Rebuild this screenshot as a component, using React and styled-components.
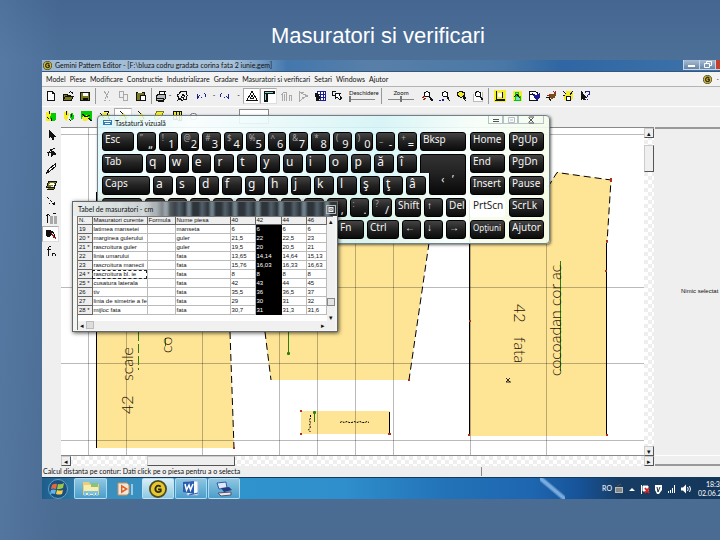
import React, { useState } from 'react'
import styled, { createGlobalStyle, css } from 'styled-components'

const COLORS = {
  k: '#111', g: '#a9a9a9', y: '#f4ee2a', o: '#7c7a1c', b: '#1b1e8c',
  n: '#0c0', w: '#fff', r: '#a02010', c: '#7fd8d8', t: '#7a4a1c', s: '#bbb'
}

// every icon is a list of [fill, stroke, path] on a 12x12 field
const ICONS = {
  newFile: [['w', 'k', 'M2.500 1.500h5l2 2v7h-7z M7.500 1.500v2h2']],
  open: [['o', 'k', 'M1.500 10V4h3l1 1h3v1.500M1.500 10l2-3.500h8L9.500 10z'], ['', 'k', 'M7 2.500q2-1.500 3.500 .5v1']],
  save: [['o', 'k', 'M1.500 2.500h9v8h-9z'], ['w', '', 'M4 2.500h4.500v3.500H4z'], ['k', '', 'M3.500 8h5v3h-5z']],
  cut: [['', 'g', 'M3.500 1.500l4 7M8 1.500l-4 7M3 10.500h1.500M7.500 10.500h1.500']],
  copy: [['', 'g', 'M1.500 1.500h4v6h-4zM5.500 4.500h4v6h-4z']],
  paste: [['o', 'k', 'M1.500 2.500h8v8h-8z'], ['w', 'k', 'M5.500 5.500h5v5h-5z'], ['', 'w', 'M3 2.500h4']],
  print: [['w', 'k', 'M4 4.500l1-3h5l-1 3'], ['s', 'k', 'M1.500 5.500l2-1h7v4l-2 1.500h-7z'], ['', 'k', 'M2 8h7M3 11h6']],
  gear: [['', 'k', 'M4 2.500l2-1.500 2 1 2-.5 0 2 1.500 2-1.500 1 0 3-2 0-2 1-1.500-1.500-2.500 .5 0-3-1-1.500 2-1z M6.500 4.500l2 1-1 2.500-2-1z M1 11l3-3']],
  undo: [['', 'b', 'M1.500 4v4l2-2.500M5 7.500h1M8.500 3.500q2 2 0 4']],
  redo: [['', 'b', 'M2.500 3.500q-2 2 0 4M5 7.500h1M7 6l2 2v-4.500']],
  triangle: [['', 'k', 'M6 1.500L11 10H1zM4.500 8h3l-1.500-2.500z']],
  corner: [['k', 'k', 'M1 1h10v2.500H4V11H1.500z'], ['', 'c', 'M2 2.200h8M2.600 4v6']],
  grayA: [['', 'g', 'M2.500 3v8M4.500 4v7M6.500 2v9M9 5v6M1 5l3-3 3 1M9 5h2v6']],
  grayB: [['', 'g', 'M2.500 2v9l7-5zM4 3l7 3-6 2M3 2h4']],
  film: [['w', 'b', 'M3 1.500h8.500v9H3zM3 4.500h8M6.500 1.500v9M9 1v10M3 7.500h8'], ['k', '', 'M1 3h3l2 4-1 4H2z']],
  pointer: [['', 'k', 'M5 1.500H1.500v4H4'], ['w', 'k', 'M4.500 3.500h5l-1.500 1.500 2.500 3-1.500 2-3-3-1.500 1z']],
  zoomA: [['w', 'k', 'M6 1.500l2.500 1v3L6 7 3.500 5.500v-3zM7.500 6.500l4 4.500M8.500 6.500l3 3.500'], ['', 'r', 'M1 8l3-2M2 10l3-2']],
  zoomB: [['w', 'k', 'M7 1.500l2.500 1v3L7 7 4.500 5.500v-3zM8.500 6.500l3 4.500M9.500 6.500l2 3'], ['', 'b', 'M1 10.500h2M4 9v2M5.500 8.500v2']],
  zoomC: [['y', 'k', 'M5.500 1.500l4 1v3l-3.500 2L2.500 5.500v-3zM7.500 6.500l3.500 4.500M9 6l2 3']],
  zoomD: [['w', 's', 'M1.500 4v7h9V2'], ['w', 'k', 'M5.500 1.500l3 1v3L6 7 3.500 5.500v-3zM7.500 6.500l3 3.500M8.500 6.500l2 2.500']],
  ruler: [['y', 'y', 'M0 0h12v12H0z'], ['', 'k', 'M2.500 1v8h8M8.500 2v6M1 10.500h10'], ['w', '', 'M4 3h3.500v4H4z']],
  people: [['y', '', 'M2 1h9v10H2z'], ['c', 'n', 'M4 2.500h3v3H4zM5 6.500h4v4H4z'], ['', 'k', 'M3 7l3-3 3 4']],
  folder: [['w', 'k', 'M1.500 1.500h6l2 1.500v7.500h-8z'], ['b', 'b', 'M5 4l3 2 3-2v3.500L9 10 6.500 7.500z'], ['', 'k', 'M1 4h5']],
  brush: [['t', 't', 'M5 4h4l2-2.500-1 5L7.500 8.500 4.500 7z'], ['y', 'k', 'M1.500 7l3 1 1 3'], ['', 'r', 'M8 1l3 3M2 5h3']],
  spark: [['y', 'y', 'M5 1l5 1 1 6-4 3-5-2z'], ['w', 'k', 'M4.500 6h4v4h-4zM1 1l3 3M8 5l3-4M1 5h2']],
  help: [['k', 'k', 'M2 1.500v8l2-2 1 2.500 1-.5-1-2.500h2z'], ['', 'b', 'M6.500 3q0-2 2-2t2 2-2 2.500v1.500M8.500 8.500v1.500']],
  pieceA: [['y', '', 'M1 2l3-1 2 3v7H1z'], ['n', '', 'M6 3h5v7l-3 1.500-3-3z'], ['', 'k', 'M4 1v3M2 7l2 2M6.500 8v3']],
  pieceB: [['y', '', 'M1 2l4-1 1 4-2 6-3-2z'], ['n', '', 'M8 3q3 0 3 4t-3 3l-1-4z'], ['', 'k', 'M3 1l1 4M6 9l2 2M8 4v3']],
  pieceC: [['n', '', 'M0 1h11v9l-4-2-4 2-3-1z'], ['y', '', 'M1 7l5-2 4 5-8 1z'], ['', 'k', 'M1 4l4 3 4-2M7 8l4 3']],
  pieceD: [['y', '', 'M1 5l5-3 5 2-2 7H2z'], ['', 'k', 'M1 3l4 5M5 1h5l-2 4M9 6l2 5']],
  pieceE: [['y', '', 'M1 8l5-5 5 5-3 3H3z'], ['', 'k', 'M3 1l3 3M7 5l2 4']],
  pieceF: [['y', 'o', 'M4 1h7l-3 6-5 4-2-4z']],
  pieceG: [['y', 'k', 'M2.500 1.500h8v9l-8-1zM5 1v9M8 1v9M2 5h8']],
  arrow: [['k', 'k', 'M4 1v8l2-1.500L8 11l1-1-1.500-3H9.500z']],
  curve: [['', 'k', 'M3 11q-1-6 7-9M2 6h8'], ['k', 'k', 'M6 4l5 4-3 .5-1.500 2z']],
  pen: [['w', 'k', 'M10.500 1.500L3 8l1 2 7-6zM3 8l-1.500 3 2-1']],
  book: [['o', 'k', 'M3.500 2.500h8l-2 6H1.500zM2 10.500h7l1.500-6'], ['w', '', 'M5 4h4v1.500H4.500z']],
  line: [['', 'k', 'M2 2l2 2M5 5l2 2M7.500 8.500l2 1v-3M4 8.500h1']],
  bars: [['', 'k', 'M2.500 3v8M1 4l2-2 2 2M8 2l3-1'], ['g', 'g', 'M5 4h2v7H5zM9 4h2v7H9z']],
  measure: [['k', 'k', 'M1 3l4-1 2 3-2 3H2z'], ['', 'r', 'M6 5l5 6M8 9h3'], ['', 'k', 'M7 3l2 3M9 6v3']],
  fx: [['', 'k', 'M6 1.500H4.500Q3 2 3.500 5v6M1.500 4.500H6M7 8.500h3M7 8v3M10 8.500v2.500']]
}

const TOP_TOOLS = [
  ['newFile', 17], ['open', 17], ['save', 17], ['|'], ['cut', 17], ['copy', 17], ['paste', 17], ['|'],
  ['print', 14], ['.', 4], ['gear', 20], ['undo', 20], ['.', 4], ['redo', 18], ['.', 9],
  ['triangle', 17, true], ['corner', 17, true], ['grayA', 17], ['grayB', 17], ['film', 17], ['pointer', 17],
  ['slider', 34, 'Deschidere'], ['|'], ['slider', 34, 'Zoom'],
  ['zoomA', 17], ['zoomB', 17], ['zoomC', 17], ['zoomD', 17], ['|'],
  ['ruler', 17], ['people', 17], ['folder', 17], ['brush', 17], ['spark', 17], ['help', 17]
]
const PIECE_TOOLS = ['pieceA', 'pieceB', 'pieceC', 'pieceD', 'pieceE', 'pieceE', 'pieceF', 'pieceG']
const SIDE_TOOLS = ['arrow', 'curve', 'pen', 'book', 'line', 'bars', 'measure', 'fx']
const MENUS = ['Model', 'Piese', 'Modificare', 'Constructie', 'Industrializare', 'Gradare',
  'Masuratori si verificari', 'Setari', 'Windows', 'Ajutor']

// key: [label, width (0 = stretch), upper symbol]
const ROWS = [
  [['Esc', 32], ['„', 0, '”'], ['1', 0, '!'], ['2', 0, '@'], ['3', 0, '#'], ['4', 0, '$'], ['5', 0, '%'],
    ['6', 0, '^'], ['7', 0, '&'], ['8', 0, '*'], ['9', 0, '('], ['0', 0, ')'], ['-', 0, '_'], ['=', 0, '+'], ['Bksp', 46]],
  [['Tab', 41], ['q'], ['w'], ['e'], ['r'], ['t'], ['y'], ['u'], ['i'], ['o'], ['p'], ['ă'], ['î'], ['', 46]],
  [['Caps', 48], ['a'], ['s'], ['d'], ['f'], ['g'], ['h'], ['j'], ['k'], ['l'], ['ş'], ['ţ'], ['â'], ['‹   ’', 37]],
  [['', 40], [''], [''], [''], [''], [''], [''], [''], [''], [',', 0, ';'], ['.', 0, ':'], ['/', 0, '?'],
    ['Shift', 26], ['↑', 19], ['Del', 20]],
  [['', 32], ['', 30], [''], ['', 30], ['Fn', 27], ['Ctrl', 32], ['←', 19], ['↓', 19], ['→', 20]]
]
const NAV_KEYS = ['Home', 'PgUp', 'End', 'PgDn', 'Insert', 'Pause', 'PrtScn', 'ScrLk', 'Opţiuni', 'Ajutor']

const HEAD = ['N.', 'Masuratori curente', 'Formula', 'Nume piesa', '40', '42', '44', '46']
const DATA = [
  ['19', 'latimea mansetei', 'manseta', '6', '6', '6', '6'],
  ['20 *', 'marginea gulerului', 'guler', '21,5', '22', '22,5', '23'],
  ['21 *', 'rascroitura guler', 'guler', '19,5', '20', '20,5', '21'],
  ['22', 'linia umarului', 'fata', '13,65', '14,14', '14,64', '15,13'],
  ['23', 'rascroitura manecii', 'fata', '15,76', '16,03', '16,33', '16,63'],
  ['24 *', 'rascroitura bl. ie', 'fata', '8', '8', '8', '8'],
  ['25 *', 'cusatura laterala', 'fata', '42', '43', '44', '45'],
  ['26', 'tiv', 'fata', '35,5', '36', '36,5', '37'],
  ['27', 'linia de simetrie a fe', 'fata', '29', '30', '31', '32'],
  ['28 *', 'mijloc fata', 'fata', '30,7', '31', '31,3', '31,6']
]

const Icon = ({ name }) => (
  <Glyph viewBox="0 0 12 12" aria-hidden="true">
    {ICONS[name].map(([fill, stroke, d], i) => (
      <path key={i} d={d} fill={COLORS[fill] || 'none'} stroke={COLORS[stroke] || 'none'} />
    ))}
  </Glyph>
)

const Logo = () => (
  <svg width="9" height="9" viewBox="0 0 20 20" aria-hidden="true">
    <circle cx="10" cy="10" r="9" fill="#d9c33c" stroke="#4b4520" strokeWidth="2" />
    <path d="M14 7Q10 3 7 7t1 7q4 2 6-1v-3h-4" fill="none" stroke="#3a3516" strokeWidth="3" />
  </svg>
)

const Drawing = () => (
  <Canvas viewBox="61 128 583 327" preserveAspectRatio="xMinYMin slice">
    <g fill="#fee596">
      <path d="M96 192H225L234 448H96z" />
      <path d="M246 192H436L409 380H271z" />
      <path d="M469 200L540 200 557 172 611 180 607 243V436H469z" />
      <path d="M301 411h89v23h-89z" />
    </g>
    <path
      d="M88.500 128V456M126.500 300V456M202.500 300V456M279.500 300V456M317.500 240V456M355.500 240V456M393.500 240V456M470.500 240V456M546.500 240V456M61 134.500H644M61 287.500H644M61 363.500H644M61 440.500H644"
      fill="none" stroke="#000" strokeOpacity=".27"
    />
    <g fill="none" stroke="#000">
      <path d="M96.500 192V448M469.500 200V436M606.500 243V436M389.500 412V434" />
      <path d="M230 332L234 448M265 332L271 380M429 243L409 380M548 187L557 172.500 611 180 607 243" strokeDasharray="7 4" />
      <path d="M340 422.500l2-1 2 1 3-1 2 1 3 0 2-1 3 1 3-1 2 1 3 0 2-1 2 1M310.500 415v3l-1 2 1 3-1 2 1 2-2 3 2 2" strokeDasharray="2 1" />
      <path d="M506 378l4 4M510 378l-4 4M506 382h5" strokeWidth=".8" />
    </g>
    <g fill="none" stroke="#2e7d0e">
      <path d="M138.500 332V370" strokeDasharray="9 3" />
      <path d="M288.500 332V354M314.500 412V422M560.500 261V371M165.500 338v8" />
      <path d="M287.500 352.500h2v2h-2zM313.500 411.500h2v2h-2z" />
    </g>
    <path
      d="M300 410h2v2h-2zM300 433h2v2h-2zM388 433h3v2h-3zM408 379h2v2h-2zM233 447h2v2h-2zM468 434h2v2h-2zM606 434h2v2h-2zM610 178h2v4h-2zM606 240h2v2h-2zM605 270h2v2h-2zM469 320h2v2h-2z"
      fill="#b03018"
    />
    <Mark transform="translate(133 414) rotate(-90)">42</Mark>
    <Mark transform="translate(133 381) rotate(-90)">scale</Mark>
    <Mark transform="translate(172 353) rotate(-90)">co</Mark>
    <Mark transform="translate(514 304) rotate(90)">42</Mark>
    <Mark transform="translate(514 337) rotate(90)">fata</Mark>
    <Mark transform="translate(561 376) rotate(-90)">cocoadan cor ac</Mark>
  </Canvas>
)

const Keyboard = () => (
  <KeyboardWindow aria-label="Tastatură vizuală">
    <KeyboardTitle>
      <svg width="9" height="7" viewBox="0 0 9 7" aria-hidden="true">
        <path d="M0 1h9v5H0z" fill="#2f7fb8" /><path d="M1 2.500h7M2 4.500h5" stroke="#fff" />
      </svg>
      <span>Tastatură vizuală</span>
      <WindowButtons>
        <PaleButton aria-label="Minimizare"><svg width="12" height="8"><path d="M3 3.500h6M3 5.500h6" stroke="#555" /></svg></PaleButton>
        <PaleButton aria-label="Maximizare"><svg width="12" height="8"><path d="M3.500 1.500h6v5h-6zM5 4h3" fill="none" stroke="#bbc" /></svg></PaleButton>
        <PaleButton $wide aria-label="Închidere"><svg width="12" height="8"><path d="M3.500 1.500l5 5M8.500 1.500l-5 5M4 1h5M4 7h5" stroke="#555" /></svg></PaleButton>
      </WindowButtons>
    </KeyboardTitle>
    <KeyArea>
      <KeyRows>
        {ROWS.map((row, r) => (
          <KeyRow key={r}>
            {row.map(([label, width, symbol], i) => {
              const enter = i === row.length - 1 && (r === 1 ? 'top' : r === 2 ? 'bottom' : '')
              return (
                <Key key={i} $width={width} $letter={!width && !symbol} $enter={enter} aria-label={label.trim() || 'Tastă'}>
                  {symbol && <Symbol>{symbol}</Symbol>}
                  <KeyLabel $low={!!symbol}>{label}</KeyLabel>
                </Key>
              )
            })}
          </KeyRow>
        ))}
      </KeyRows>
      <NavGrid>
        {NAV_KEYS.map(label => (
          <Key key={label} $active={label === 'PrtScn'} $small={label === 'Opţiuni'}>{label}</Key>
        ))}
      </NavGrid>
    </KeyArea>
  </KeyboardWindow>
)

const Measurements = () => (
  <TableWindow aria-label="Tabel de masuratori">
    <TableTitle>
      <span>Tabel de masuratori - cm</span>
      <CloseBox aria-label="Inchide">
        <svg width="8" height="7"><path d="M2 1.500h4v4H2zM2 1.500l4 4M6 1.500l-4 4" fill="none" stroke="#eee" /></svg>
      </CloseBox>
    </TableTitle>
    <TableBody>
      <Table>
        <colgroup>
          {[14, 55, 28, 55, 25, 26, 25, 20].map((w, i) => <Col key={i} $width={w} />)}
        </colgroup>
        <thead>
          <tr>{HEAD.map(h => <Th key={h}>{h}</Th>)}</tr>
        </thead>
        <tbody>
          {DATA.map(([no, name, piece, ...sizes]) => (
            <tr key={no}>
              <Th as="th" scope="row">{no}</Th>
              <Td $focus={no === '24 *'}>{name}</Td>
              <Td />
              <Td>{piece}</Td>
              {sizes.map((s, i) => <Td key={i} $dark={i === 1}>{s}</Td>)}
            </tr>
          ))}
        </tbody>
      </Table>
      <SlimTrack>
        <SlimButton aria-label="Sus">▴</SlimButton>
        <SlimThumb />
        <SlimButton aria-label="Jos">▾</SlimButton>
      </SlimTrack>
      <SlimFoot>
        <SlimButton aria-label="Stanga">◂</SlimButton>
        <FootThumb />
        <SlimButton aria-label="Dreapta">▸</SlimButton>
      </SlimFoot>
    </TableBody>
  </TableWindow>
)

const Taskbar = () => (
  <Bar>
    <TaskButton $plain $width={31} aria-label="Start">
      <svg width="22" height="20" viewBox="0 0 22 20">
        <circle cx="11" cy="10" r="9.500" fill="#1c4f7e" stroke="#5fa4c8" />
        <path d="M5 6q3-2 5-1l-1 5q-3-1-5 0z" fill="#e8683a" />
        <path d="M11 5q3 1 6-1l-1 5q-3 1.500-6 1z" fill="#9cc845" />
        <path d="M4 11q3-1 5 0l-1 4q-2-1-5 0z" fill="#5db6ea" />
        <path d="M10 11q3 1 6 0l-1 4q-3 1-6 0z" fill="#f6cf47" />
      </svg>
    </TaskButton>
    <TaskButton $width={33} aria-label="Explorer">
      <svg width="20" height="17" viewBox="0 0 20 17">
        <path d="M2 2h6l1 2h9v11H2z" fill="#e9cf76" /><path d="M3 5h14v10H3z" fill="#f8edab" />
        <path d="M10 3h7v4h-7z" fill="#8cc17a" /><path d="M4 16v-4h12v4M8 16v-3h5v3" fill="none" stroke="#7cc0e4" strokeWidth="2" />
      </svg>
    </TaskButton>
    <TaskButton $plain $width={33} aria-label="Media Player">
      <svg width="18" height="16" viewBox="0 0 18 16">
        <path d="M15 3h2v11h-2z" fill="#9cc8e6" />
        <path d="M2 2h9l2 2v8l-2 2H2z" fill="#ece6dc" stroke="#c9905c" />
        <path d="M5 3.500l7 4.500-7 4.500z" fill="#e3611b" /><path d="M6.500 6.500l2.500 1.500-2.500 1.500z" fill="#fff" />
      </svg>
    </TaskButton>
    <TaskButton $width={32} $open aria-label="Gemini">
      <svg width="18" height="18" viewBox="0 0 20 20">
        <circle cx="10" cy="10" r="9" fill="#e6c92e" stroke="#4e4a24" strokeWidth="2" />
        <path d="M13 7.500Q10 5 8 7.500t0 5q2.500 2 5 0v-2h-3" fill="none" stroke="#2e2a10" strokeWidth="2" />
      </svg>
    </TaskButton>
    <TaskButton $width={32} aria-label="Word">
      <svg width="18" height="17" viewBox="0 0 18 17">
        <path d="M5 1h11v14H5z" fill="#f5f8fc" stroke="#9cb4d6" /><path d="M1 2l11-1v13L1 12z" fill="#2a5db0" />
        <path d="M3 4l1.500 6L7 5l1.500 5L11 4" fill="none" stroke="#fff" strokeWidth="1.500" /><path d="M7 15l9-2" stroke="#2a5db0" />
      </svg>
    </TaskButton>
    <TaskButton $width={32} aria-label="Imprimanta">
      <svg width="18" height="16" viewBox="0 0 18 16">
        <path d="M2 2l9-1 1 6-8 1z" fill="#dde8f8" stroke="#3358a8" /><path d="M6 7l8-1 3 3-8 2z" fill="#2a3a80" />
        <path d="M3 12l13-1v3l-10 1z" fill="#e7e9f2" stroke="#556" />
      </svg>
    </TaskButton>
    <Tray>
      <span>RO</span>
      <svg width="90" height="12" viewBox="614 0 90 12" aria-hidden="true">
        <path d="M615 4h8v6h-8z" fill="#b9bcb6" /><path d="M616 6h6M616 8h6M617 3l4-2" stroke="#555" />
        <path d="M629 8l3-3 3 3z" fill="#fff" />
        <path d="M641.500 2v9M643 3h5v5h-5z" fill="#fff" stroke="#fff" /><path d="M645 5l4 5M649 5l-4 5" stroke="#d22" strokeWidth="2" />
        <path d="M655 2h7v5l-3 4h-2l-2-4z" fill="#fff" /><path d="M657 4l1 5 2-5" fill="none" stroke="#234" />
        <path d="M668.500 8v2M670.500 7v3M672.500 5v5M674.500 2v8" stroke="#fff" />
        <path d="M681 4.500h2l3-3v9l-3-3h-2z" fill="#fff" /><path d="M687.500 4q1.500 2 0 4M689.500 3q2 3 0 6" stroke="#fff" fill="none" />
      </svg>
      <Clock><span>18:34</span><span>02.06.20</span></Clock>
    </Tray>
  </Bar>
)

const App = () => {
  const [values, setValues] = useState({ Deschidere: 0, Zoom: 50 })

  return (
    <Slide>
      <GlobalStyle />
      <Heading>Masuratori si verificari</Heading>
      <Screen>
        <TitleBar>
          <Logo />
          <span>Gemini Pattern Editor - [F:\bluza codru gradata corina fata 2 iunie.gem]</span>
          <Controls>
            <Control aria-label="Minimize"><svg width="15" height="9"><path d="M4 5h7v2H4z" fill="#fff" /></svg></Control>
            <Control aria-label="Restore"><svg width="15" height="9"><path d="M4.500 3.500h5v4h-5zM6.500 3V1.500h5v4H10" fill="none" stroke="#fff" /></svg></Control>
            <Control $close aria-label="Close" />
          </Controls>
        </TitleBar>
        <MenuBar>
          {MENUS.map(m => <MenuItem key={m}>{m}</MenuItem>)}
          <MenuEnd><Logo /><i>-</i></MenuEnd>
        </MenuBar>
        <Toolbar>
          {TOP_TOOLS.map(([name, width, extra], i) => {
            if (name === '|') return <Separator key={i} />
            if (name === '.') return <More key={i} $width={width}>-</More>
            if (name === 'slider') {
              return (
                <SliderBox key={i} $width={width}>
                  <span>{extra}</span>
                  <Slider
                    type="range"
                    value={values[extra]}
                    onChange={e => setValues({ ...values, [extra]: Number(e.target.value) })}
                  />
                </SliderBox>
              )
            }
            return <Tool key={i} $width={width} $pressed={extra} aria-label={name}><Icon name={name} /></Tool>
          })}
        </Toolbar>
        <Toolbar $second>
          {PIECE_TOOLS.map((name, i) => <Tool key={i} $width={18} $pressed={i === 4} aria-label={name}><Icon name={name} /></Tool>)}
          <Option><input type="checkbox" aria-label="Automat" /></Option>
          <Field aria-label="Valoare" />
        </Toolbar>
        <Work>
          <Side>
            {SIDE_TOOLS.map(name => <Tool key={name} $width={17} $pressed={name === 'measure'} aria-label={name}><Icon name={name} /></Tool>)}
          </Side>
          <Sheet>
            <Drawing />
            <Track>
              <ScrollButton aria-label="Sus">▴</ScrollButton>
              <Thumb />
              <ScrollButton $end aria-label="Jos">▾</ScrollButton>
            </Track>
            <Track $across>
              <ScrollButton aria-label="Stanga">◂</ScrollButton>
              <Thumb $across />
            </Track>
            <ScrollButton aria-label="Dreapta">▸</ScrollButton>
          </Sheet>
          <Pane><p>Nimic selectat</p></Pane>
        </Work>
        <Status>
          <span>Calcul distanta pe contur: Dati click pe o piesa pentru a o selecta</span>
          <span />
        </Status>
        <Taskbar />
        <Keyboard />
        <Measurements />
      </Screen>
    </Slide>
  )
}

export default App

const GlobalStyle = createGlobalStyle`
  * {
    box-sizing: border-box;
  }
  body {
    margin: 0;
    overflow: hidden;
    background: #4a6c93;
  }
  button, input {
    font: inherit;
    color: inherit;
    margin: 0;
    padding: 0;
    border: 0;
    border-radius: 0;
    background: none;
  }
`

const Slide = styled.main`
  min-height: 100vh;
  padding-left: 42px;
  overflow: hidden;
  font-family: Lato, 'Liberation Sans', sans-serif;
  font-size: 7px;
  line-height: 9px;
  color: #111;
  background:
    linear-gradient(90deg, rgba(110, 150, 195, .25), transparent 60px),
    linear-gradient(#446690, #4d7099 60px, #4a6b92);
`
const Heading = styled.h1`
  height: 60px;
  margin: 0;
  padding: 10px 6px 0 0;
  text-align: center;
  font-family: 'Liberation Sans', sans-serif;
  font-size: 22px;
  font-weight: 400;
  line-height: 52px;
  color: #fff;
`
const Screen = styled.section`
  position: relative;
  background: #efefef;
`
const TitleBar = styled.header`
  display: flex;
  align-items: center;
  gap: 3px;
  height: 12px;
  padding-left: 1px;
  white-space: nowrap;
  background: linear-gradient(90deg, #9db9d4, #a9c2da 190px, #4377ad 245px, #587fa8 330px, #4a78a6 460px, #2f66a3 520px, #3f72aa);
  border-bottom: 1px solid #34577e;
`
const Controls = styled.div`
  display: flex;
  align-self: flex-start;
  margin-left: auto;
`
const Control = styled.button`
  display: flex;
  width: ${props => props.$close ? '5px' : '16px'};
  height: 10px;
  border: 1px solid #c8d6e4;
  border-top: 0;
  border-right: 0;
  background: ${props => props.$close ? '#c5402c' : 'linear-gradient(#a9bdd2, #6484a8)'};
`
const MenuBar = styled.nav`
  display: flex;
  align-items: center;
  gap: 4px;
  height: 14px;
  padding-left: 4px;
  background: #f3f3f3;
`
const MenuItem = styled.button`
  white-space: nowrap;
`
const MenuEnd = styled.span`
  display: flex;
  gap: 5px;
  margin-left: auto;
  padding-right: 1px;
`
const Toolbar = styled.div`
  display: flex;
  align-items: center;
  height: ${props => props.$second ? '21px' : '20px'};
  padding-bottom: 2px;
  border-top: 1px solid ${props => props.$second ? '#fff' : '#b4b4b4'};
`
const Tool = styled.button`
  display: flex;
  flex: none;
  align-items: center;
  justify-content: center;
  width: ${props => props.$width}px;
  height: 16px;
  ${props => props.$pressed && css`
    background: #fff;
    border: 1px solid #aaa;
    border-right-color: #ddd;
    border-bottom-color: #ddd;
  `}
`
const Glyph = styled.svg`
  flex: none;
  width: 12px;
  height: 12px;
  shape-rendering: crispEdges;
`
const Separator = styled.span`
  width: 1px;
  height: 16px;
  margin: 0 2px;
  background: #999;
`
const More = styled.span`
  width: ${props => props.$width}px;
  text-align: center;
`
const SliderBox = styled.label`
  display: flex;
  flex-direction: column;
  width: ${props => props.$width}px;
  padding: 0 4px;
  font-size: 6px;
  line-height: 7px;
  text-align: center;
`
const Slider = styled.input`
  appearance: none;
  width: 100%;
  height: 6px;
  background: linear-gradient(#888, #888) 0 3px / 100% 1px no-repeat;
  &::-webkit-slider-thumb {
    appearance: none;
    width: 2px;
    height: 6px;
    background: #777;
  }
`
const Option = styled.label`
  display: flex;
  width: 38px;
  margin-left: 4px;
  input {
    width: 7px;
    height: 7px;
  }
`
const Field = styled.input`
  width: 30px;
  height: 15px;
  margin-left: 11px;
  border: 1px solid #888;
  background: #fff;
`
const Work = styled.div`
  display: flex;
`
const Side = styled.div`
  display: grid;
  grid-template-rows: repeat(8, 1fr);
  height: 132px;
  width: 19px;
`
const Sheet = styled.div`
  display: grid;
  flex: 1;
  grid-template-columns: 1fr 10px;
  grid-template-rows: auto 10px;
  border-top: 1px solid #888;
  background: #fff;
`
const Canvas = styled.svg`
  display: block;
  width: 100%;
  height: auto;
  border-bottom: 1px solid #888;
`
const Mark = styled.text`
  font-family: Lato, sans-serif;
  font-size: 16px;
  font-weight: 300;
  fill: #1c1206;
`
const Track = styled.div`
  display: flex;
  flex-direction: ${props => props.$across ? 'row' : 'column'};
  background: conic-gradient(#eee 25%, #fff 0 50%, #eee 0 75%, #fff 0) 0 0 / 8px 8px;
`
const ScrollButton = styled.button`
  width: 10px;
  height: 10px;
  margin-top: ${props => props.$end ? 'auto' : 0};
  line-height: 7px;
  background: #efefef;
  border: 1px solid #ccc;
  border-right-color: #555;
  border-bottom-color: #555;
`
const Thumb = styled.div`
  width: ${props => props.$across ? '88px' : '10px'};
  height: ${props => props.$across ? '10px' : '27px'};
  margin: ${props => props.$across ? '0 0 0 76px' : '7px 0 0'};
  background: #efefef;
  border: 1px solid #ccc;
  border-right-color: #555;
  border-bottom-color: #555;
`
const Pane = styled.aside`
  width: 65px;
  margin-left: 1px;
  padding-left: 26px;
  border-top: 2px solid #999;
  border-bottom: 2px solid #999;
  background: linear-gradient(#fff, #fff) 0 326px / 100% 1px no-repeat;
  white-space: nowrap;
  p {
    margin: 158px 0 0;
    font: 6px/9px 'Liberation Sans', sans-serif;
  }
`
const Status = styled.footer`
  display: flex;
  align-items: center;
  justify-content: space-between;
  height: 11px;
  padding-left: 1px;
  span + span {
    width: 239px;
    height: 9px;
    border-left: 1px solid #888;
  }
`
const Bar = styled.div`
  display: flex;
  gap: 1px;
  height: 22px;
  border-top: 1px solid #123a5c;
  background:
    linear-gradient(to top right, transparent 40%, rgba(160, 205, 245, .7) 47% 53%, transparent 60%) 498px 0 / 25px 21px no-repeat,
    linear-gradient(90deg, #1d5d8c, #3a8fbd 60px, #2f93cc 200px, #2f8fcc 300px, #2373b8 400px, #1e66b0 490px, #17549a 535px, #173c63 580px, #14365a);
`
const TaskButton = styled.button`
  display: flex;
  align-items: center;
  justify-content: center;
  width: ${props => props.$width}px;
  height: 21px;
  ${props => !props.$plain && css`
    border: 1px solid rgba(190, 228, 245, .8);
    border-radius: 2px;
    background: ${props.$open ? 'linear-gradient(#d9eef6, #8cc7e2)' : 'linear-gradient(#8fc6e0, #4a9ecb)'};
  `}
`
const Tray = styled.div`
  display: flex;
  align-items: center;
  gap: 2px;
  margin-left: auto;
  color: #fff;
`
const Clock = styled.span`
  display: flex;
  flex-direction: column;
  width: 22px;
  margin-left: -8px;
  overflow: hidden;
  span:first-child {
    padding-left: 8px;
  }
`
const KeyboardWindow = styled.section`
  position: absolute;
  top: 55px;
  left: 55px;
  width: 453px;
  border: 1px solid #72808a;
  border-radius: 4px;
  box-shadow: 1px 1px 3px rgba(0, 0, 0, .6);
  background: linear-gradient(100deg, rgba(218, 246, 250, .85), rgba(250, 255, 255, .9) 20%, rgba(214, 245, 247, .9) 60%, rgba(248, 255, 250, .92) 80%, rgba(244, 252, 232, .92));
`
const KeyboardTitle = styled.div`
  display: flex;
  gap: 3px;
  height: 16px;
  padding: 3px 5px 0;
`
const WindowButtons = styled.div`
  display: flex;
  margin-left: auto;
  align-self: flex-start;
`
const PaleButton = styled.button`
  display: flex;
  justify-content: center;
  width: ${props => props.$wide ? '26px' : '15px'};
  height: 8px;
  margin-top: -3px;
  border: 1px solid #b5c2c8;
  border-top: 0;
`
const KeyArea = styled.div`
  display: flex;
  gap: 4px;
  padding: 0 5px 4px 4px;
`
const KeyRows = styled.div`
  display: flex;
  flex: 1;
  flex-direction: column;
  gap: 3px;
`
const KeyRow = styled.div`
  display: flex;
  gap: 3px;
`
const NavGrid = styled.div`
  display: grid;
  grid-template-columns: 35px 35px;
  gap: 3px 4px;
`
const Key = styled.button`
  display: flex;
  flex: ${props => props.$width ? `0 0 ${props.$width}px` : '1 1 0'};
  min-width: 0;
  height: 19px;
  padding: 0 2px;
  overflow: hidden;
  white-space: pre;
  font-family: 'Noto Sans', sans-serif;
  font-size: ${props => props.$small ? '8px' : props.$letter ? '12px' : '10px'};
  line-height: 13px;
  color: #f4f4f4;
  border: 1px solid #000;
  border-radius: 3px;
  background: linear-gradient(#444, #222 50%, #0c0c0c);
  ${props => props.$active && css`
    color: #222;
    border-color: #fff;
    background: #fff;
  `}
  ${props => props.$enter === 'top' && css`
    border-bottom: 0;
    border-radius: 3px 3px 0 0;
    background: linear-gradient(#333, #222);
  `}
  ${props => props.$enter === 'bottom' && css`
    height: 22px;
    margin-top: -3px;
    justify-content: center;
    border-top: 0;
    border-radius: 0 0 3px 3px;
    background: linear-gradient(#222, #080808);
  `}
`
const Symbol = styled.span`
  font-size: 8px;
  line-height: 10px;
  color: #aaa;
`
const KeyLabel = styled.span`
  ${props => props.$low && css`
    margin: 4px 0 0 auto;
    font-size: 11px;
    line-height: 14px;
  `}
`
const TableWindow = styled.section`
  position: absolute;
  top: 141px;
  left: 30px;
  width: 266px;
  height: 131px;
  padding: 0 4px;
  border: 1px solid #666;
  background: #f4f6f4;
  box-shadow: 1px 1px 4px rgba(0, 0, 0, .7);
`
const TableTitle = styled.div`
  display: flex;
  align-items: center;
  justify-content: space-between;
  height: 14px;
  margin: 0 -4px;
  padding: 0 1px 0 5px;
  background:
    linear-gradient(90deg, #e9eeee, rgba(225, 230, 230, .85) 75px, transparent 105px),
    repeating-linear-gradient(90deg, #6f7f88 0 2px, #2d343a 5px 10px, #53616c 14px, #2d343a 20px, #6f7f88 23px);
`
const CloseBox = styled.button`
  display: flex;
  width: 10px;
  height: 9px;
  border: 1px solid #bbb;
`
const TableBody = styled.div`
  display: grid;
  grid-template-columns: 1fr 8px;
  grid-template-rows: 104px 9px;
  border: 1px solid #777;
  border-width: 1px 0 0 1px;
  background: #fff;
`
const Table = styled.table`
  table-layout: fixed;
  width: 100%;
  height: 98px;
  border-collapse: collapse;
  font: 6px/7px 'Liberation Sans', sans-serif;
`
const Col = styled.col`
  width: ${props => props.$width}px;
`
const Th = styled.th`
  padding: 0 1px;
  overflow: hidden;
  white-space: nowrap;
  text-align: left;
  font-weight: 400;
  background: #eee;
  border: 1px solid #666;
  border-width: 0 1px 1px 0;
`
const Td = styled.td`
  padding: 0 1px;
  overflow: hidden;
  white-space: nowrap;
  border: 1px solid #bbb;
  border-width: 0 1px 1px 0;
  ${props => props.$dark && css`
    color: #fff;
    background: #000;
    border-color: #000;
  `}
  ${props => props.$focus && css`
    outline: 1px dashed #222;
    outline-offset: -1px;
  `}
`
const SlimTrack = styled.div`
  display: flex;
  flex-direction: column;
  background: #f0f0f0;
`
const SlimButton = styled.button`
  width: 8px;
  height: 8px;
  line-height: 8px;
`
const SlimThumb = styled.div`
  height: 8px;
  margin: auto 0 7px;
  border: 1px solid #888;
  background: #e4e4e4;
`
const SlimFoot = styled.div`
  display: flex;
  grid-column: 1 / -1;
  padding-right: 8px;
  background: #f0f0f0;
`
const FootThumb = styled.div`
  width: 8px;
  height: 8px;
  margin-right: auto;
  border: 1px solid #bbb;
  background: #ddd;
`
